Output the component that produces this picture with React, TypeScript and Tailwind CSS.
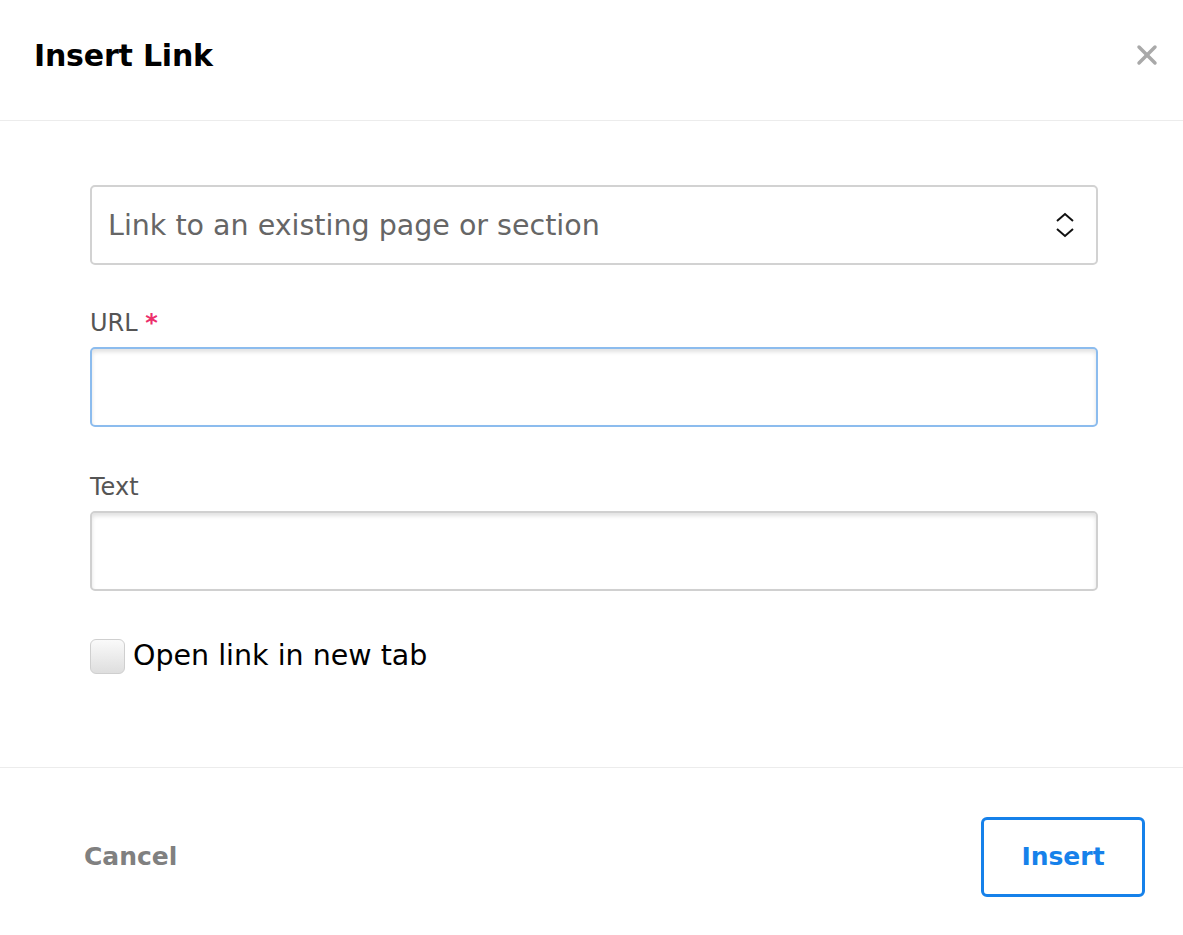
import { X } from 'lucide-react'

export default function App() {
  return (
    <div className="min-h-screen w-full bg-white text-black" style={{ fontFamily: '"DejaVu Sans", "Noto Sans", sans-serif' }}>
      {/* Header */}
      <div className="flex h-[121px] items-center justify-between border-b border-[#ececec] pb-[10px] pl-[34px] pr-[16px]">
        <h1 className="text-[30px] font-bold tracking-[-0.2px]">Insert Link</h1>
        <button className="flex h-10 w-10 items-center justify-center text-[#a9a9a9]">
          <X size={32} strokeWidth={2.6} />
        </button>
      </div>

      {/* Body */}
      <div className="flex h-[647px] flex-col border-b border-[#ececec] pl-[90px] pr-[85px] pt-[64px]">
        <div className="flex h-[80px] items-center justify-between rounded-[5px] border-2 border-[#d2d2d2] pl-[16px] pr-[20px]">
          <span className="pt-[3px] text-[28.5px] text-[#666]">Link to an existing page or section</span>
          <svg width="22" height="30" viewBox="0 0 22 30" fill="none" stroke="#111" strokeWidth="2">
            <path d="M3 11 L11 4 L19 11" />
            <path d="M3 19 L11 26 L19 19" />
          </svg>
        </div>

        <label className="mt-[42px] text-[24px] leading-[32px] text-[#555]">
          URL <span className="font-bold text-[#ec2f6b]">*</span>
        </label>
        <div className="mt-[8px] h-[80px] rounded-[5px] border-2 border-[#8cbcee] shadow-[inset_0_3px_4px_rgba(0,0,0,0.12)]" />

        <label className="mt-[44px] text-[24px] leading-[32px] text-[#555]">Text</label>
        <div className="mt-[8px] h-[80px] rounded-[5px] border-2 border-[#d0d0d0] shadow-[inset_0_3px_4px_rgba(0,0,0,0.12)]" />

        <div className="mt-[44px] flex items-center gap-[8px]">
          <div className="h-[35px] w-[35px] rounded-[6px] border border-[#cfcfcf] bg-gradient-to-b from-[#fafafa] to-[#dedede]" />
          <span className="text-[28.5px] text-black">Open link in new tab</span>
        </div>
      </div>

      {/* Footer */}
      <div className="flex items-center justify-between pl-[84px] pr-[38px] pt-[49px]">
        <button className="text-[25px] font-bold text-[#808080]">Cancel</button>
        <button className="flex h-[80px] w-[164px] items-center justify-center rounded-[6px] border-[3px] border-[#1681ea] text-[25px] font-bold text-[#1681ea]">
          Insert
        </button>
      </div>
    </div>
  )
}
